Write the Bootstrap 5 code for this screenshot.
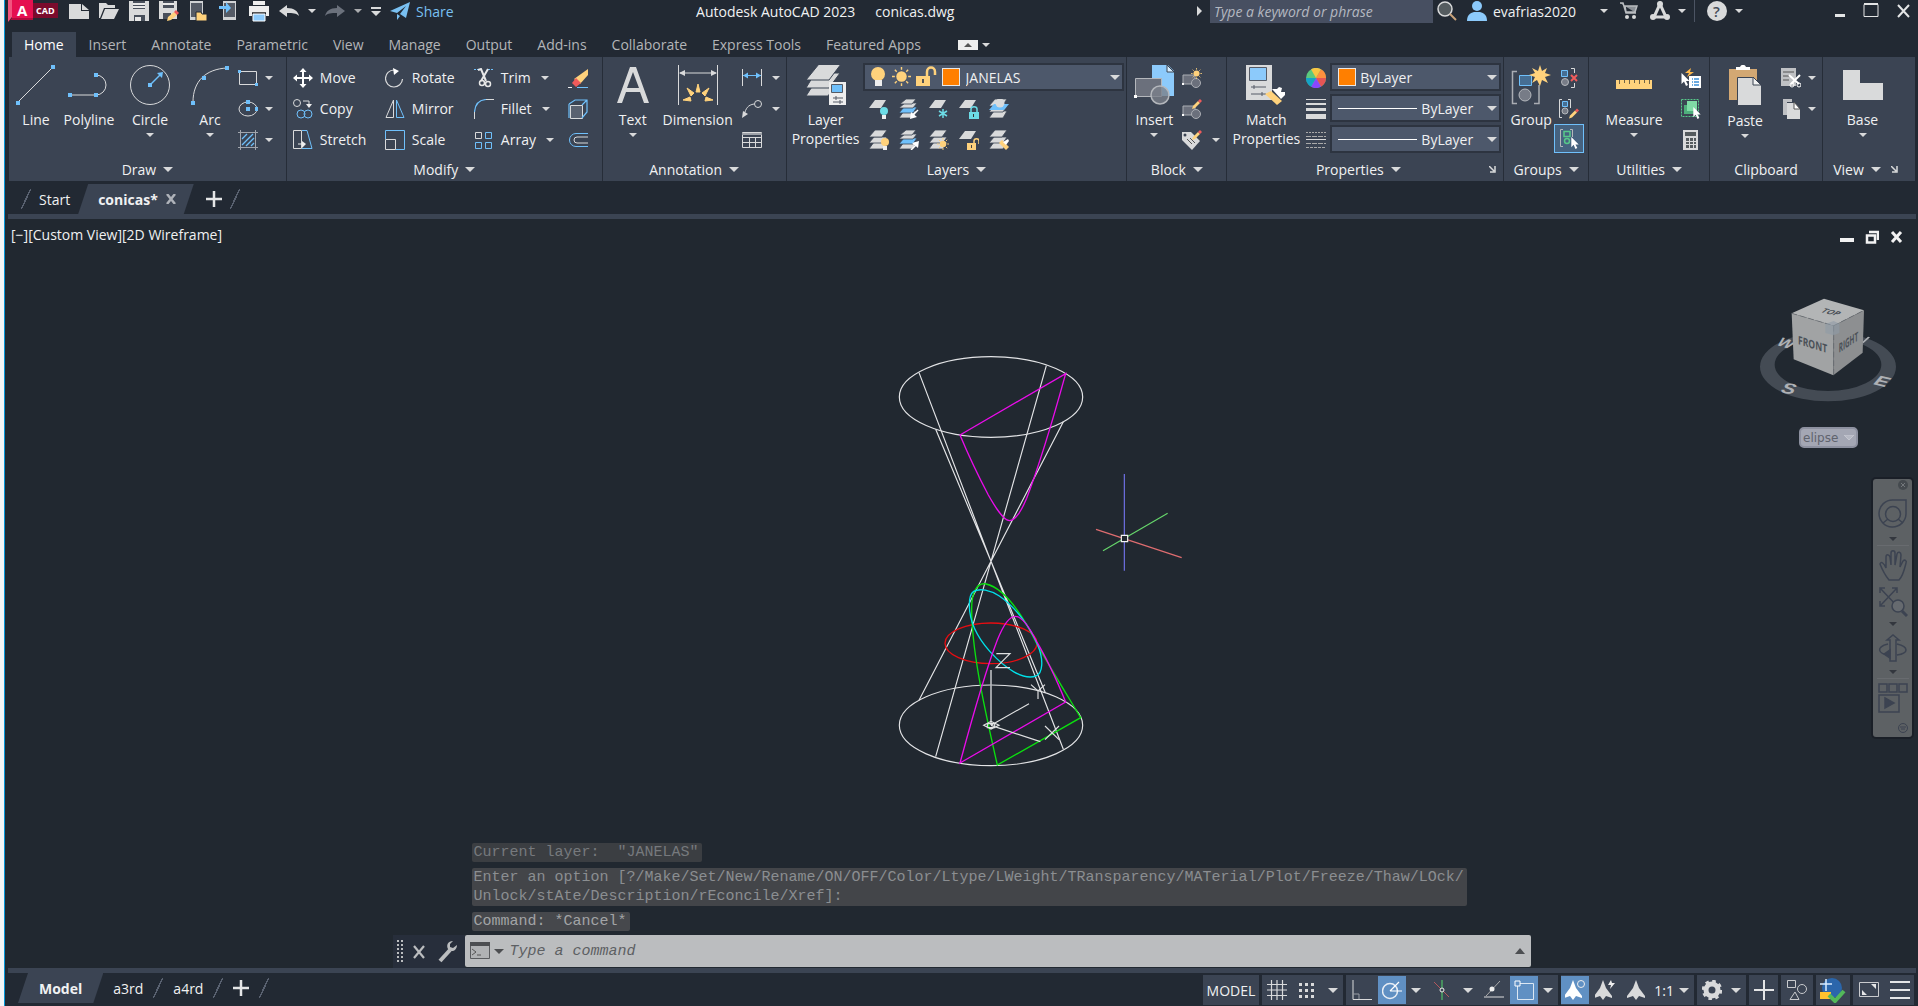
<!DOCTYPE html>
<html lang="en">
<head>
<meta charset="utf-8">
<meta name="viewport" content="width=device-width, initial-scale=1">
<title>Autodesk AutoCAD 2023 - conicas.dwg</title>
<link href="https://cdn.jsdelivr.net/npm/bootstrap@5.3.0/dist/css/bootstrap.min.css" rel="stylesheet">
<style>
:root{--chrome:#222933;--panel:#3b4453;--field:#4d586b;--ink:#f0f1f2;--g:#d9dadb;--b:#6fc0fb;--y:#ffd27c}
html{background:#f4f5f6}
body{margin-left:4px;border-left:1px solid #0696d7;background:var(--chrome);color:var(--ink);font-family:"Open Sans","Noto Sans",sans-serif;font-size:14px;line-height:19px;height:100vh;overflow:hidden}
button,select,input{font:inherit;color:inherit}
button{background:none;border:0;padding:0;white-space:nowrap}
a{color:inherit;text-decoration:none}
svg{flex:none;display:block}
.caret-s,.caret-l{flex:none;display:block;width:0;height:0;border:solid transparent;border-top-color:var(--g)}
.caret-s{border-width:4px 4px 0}
.caret-l{border-width:5px 5px 0}
/* title bar */
.titlebar{height:32px;padding:0 8px 10px 3px}
.qat{gap:10px;margin-left:11px}
.qat .caret-s{margin:0 -1px}
.brand-mark{width:50px;height:24px}
.share-link{color:#79c0f2;gap:6px;margin-left:9px}
.doc-title{gap:20px}
.user-link{gap:6px;margin-left:10px}
.find-box{width:223px;height:24px;background:#474f61;border:0;padding:0 4px;font-style:italic;outline:0}
.find-box::placeholder{color:#b4b8c0;opacity:1}
.sep-v{width:1px;height:22px;background:#4c5463}
/* ribbon */
.ribbon-tabs{height:25px;padding-left:7px;gap:1px}
.ribbon-tabs .nav-link{padding:3px 12px;color:#b3b5b8;height:25px;border-radius:0}
.ribbon-tabs .nav-link.active{background:var(--panel);color:#fff}
.ribbon{display:grid;grid-template-columns:278fr 316fr 184fr 341fr 100fr 277fr 85fr 121fr 113fr 92fr;margin:0 3px 0 4px;height:124px;background:var(--panel)}
.rpanel{display:flex;flex-direction:column;min-width:0;border-right:1px solid #262d38}
.rpanel:last-child{border-right:0}
.rbody{display:flex;height:98px;padding:5px 0 0 3px}
.rbody.snug{padding-left:1px}
.rfoot{height:26px;display:flex}
.rfoot button{flex:1;display:flex;justify-content:center;align-items:center;gap:7px;padding-top:2px}
.rfoot .launch{flex:0 0 14px;justify-content:start}
.rfoot .launch.wide{flex-basis:24px}
.big{display:flex;flex-direction:column;align-items:center;height:93px;padding-top:3px;line-height:19px;flex:none}
.big svg{margin-bottom:5px}
.big .caret-s{margin-top:4px}
.w48{width:48px}.w58{width:58px}.w64{width:64px}.w72{width:72px}
.sm-col{display:flex;flex-direction:column;flex:none}
.tool{display:flex;align-items:center;height:31px;gap:7px;text-align:left}
.tool .caret-s{margin-left:3px}
.mod-grid{display:grid;grid-template-columns:92px 89px 94px 20px;align-content:start;padding-left:6px}
.combos{padding:1px 2px 0 4px}
.lay-combos{padding:1px 2px 0 1px}
.lay-row{gap:10px;padding-left:6px}
.combo{display:flex;align-items:center;height:28px;background:var(--field);border:2px solid #2d3440;padding:0 2px 0 6px}
.combo select{flex:1;min-width:0;appearance:none;background:transparent;border:0;outline:0;padding:0 0 0 4px}
.combo option{color:#222}
.combo.lay{margin-bottom:2px}
.combo.lay select{padding-left:6px}
.sw{width:18px;height:18px;background:#ff7f00;border:1px solid #e8e8e8;flex:none}
.ltline{width:79px;height:1px;background:#fff;flex:none}
.picked{background:#46627f;outline:1px solid var(--b);height:27px;width:28px;justify-content:center;margin-top:1px}
/* file tabs */
.file-tabs{height:33px;padding-top:3px}
.slant{clip-path:polygon(10px 0,100% 0,calc(100% - 10px) 100%,0 100%);background:var(--panel);font-weight:700;height:30px}
.rule{height:5px;background:var(--panel);margin:0 2px 0 3px;flex:none}
.slash{width:10px;height:20px;flex:none;background:linear-gradient(116deg,transparent 46%,#596170 46%,#596170 54%,transparent 54%)}
/* drawing area */
.stage{background:#212830;min-height:0}
.vp-label{position:absolute;left:6px;top:6px}
.vp-btns{position:absolute;right:14px;top:11px;gap:11px}
.sketch{position:absolute;left:calc(50% - 82px);top:121px;overflow:visible}
.cube{position:absolute;right:0;top:61px}
.ucs-btn{position:absolute;right:60px;top:208px;width:59px;height:21px;border:2px solid #8d91a0;border-radius:5px;background:#a4a7b4;color:#5f636d;font:12px/16px "DejaVu Sans",sans-serif;display:flex;align-items:center;padding-left:2px;gap:6px}
.navbar-v{position:absolute;right:6px;top:260px;width:39px;height:258px;background:#5d6164;border-radius:3px;box-shadow:0 0 0 2px #1a1f27;display:flex;flex-direction:column;align-items:center}
.navbar-v hr{width:32px;margin:0;border-color:#8a8d90;height:1px}
.navbar-v .caret-s{border-top-color:#33373e}
.cmd{position:absolute;left:0;right:0;bottom:0;width:1138px;max-width:100%;margin:0 auto;font-family:"Liberation Mono",monospace;font-size:15px}
.hist{padding-left:79px;gap:6px;margin-bottom:4px;line-height:19px}
.hist div{background:#434549;color:#8b8e91;padding:0 3px 0 2px;border-radius:2px}
.hist .dim{background:#3b3e42;color:#76797d;white-space:pre}
.hist .lit{background:#46484c;color:#a2a4a6}
.cmd-left{width:72px;background:#272e3b;height:33px;gap:9px;padding-left:3px}
.cmd-box{flex:1;background:#bbbdbf;height:32px;border-radius:2px;padding:0 6px 0 5px}
.cmd-box .caret-l,.cmd-box .caret-l{border-top-color:#4c4e51}
.cmd-box input{flex:1;background:transparent;border:0;outline:0;font-style:italic;padding:0 0 0 6px}
.cmd-box input::placeholder{color:#5d6063;opacity:1}
/* status bar */
.status{height:33px}
.layouts{height:30px;gap:10px;padding-left:13px}
.layouts .slant{padding:0 21px}
.groups-row{gap:3px;padding:2px 4px 0 0}
.sgrp{background:var(--panel);height:30px;display:flex;align-items:center}
.sgrp button{height:28px;display:flex;align-items:center;justify-content:center}
.sgrp .caret-l{margin:0 5px}
.sgrp .on{background:#6090c3;width:28px}
.w29{width:29px}.w32{width:32px}.w34{width:34px}
</style>
<script src="https://cdn.jsdelivr.net/npm/bootstrap@5.3.0/dist/js/bootstrap.bundle.min.js"></script>
</head>
<body class="d-flex flex-column">
<svg width="0" height="0" class="position-absolute">
<symbol id="one" viewBox="0 0 20 20"><path d="M6 1h11l-5 8H0z" fill="#d9dadb"/></symbol>
<symbol id="stk" viewBox="0 0 20 20"><g fill="#d9dadb" stroke="#3b4453" stroke-width=".8"><path d="M5 12h13l-4 7H0z"/><path d="M5 7h13l-4 6H0z"/><path d="M6 0h12l-5 7H0z"/></g></symbol>
<symbol id="stkb" viewBox="0 0 20 20"><g stroke="#3b4453" stroke-width=".8"><path d="M5 12h13l-4 7H0z" fill="#d9dadb"/><path d="M5 8h13l-4 6H0z" fill="#6fc0fb"/><path d="M6 4h12l-4 5H0z" fill="#d9dadb"/><path d="M7 0h10l-4 5H1z" fill="#d9dadb"/></g></symbol>
<symbol id="pencil" viewBox="0 0 10 10"><path d="M0 10l1-3 5-5 2 2-5 5z" fill="#ffd27c"/><path d="M6 2l2-2 2 2-2 2z" fill="#ef5b5b"/></symbol>
<symbol id="sun" viewBox="0 0 20 20"><circle cx="10" cy="10" r="5.500" fill="#ffd27c"/><path d="M10 0v3M10 17v3M0 10h3M17 10h3M3 3l2 2M15 15l2 2M3 17l2-2M15 5l2-2" stroke="#ffd27c" stroke-width="1.500"/></symbol>
<symbol id="arrowcur" viewBox="0 0 8 13"><path d="M0 0v11l2.500-2.500L4.500 13l2-1-2-4H8z" fill="#fff"/></symbol>
<symbol id="blk" viewBox="0 0 20 20"><path d="M1 7h12v9H1z" fill="#6b707c" stroke="#aaadb3"/><circle cx="14" cy="15" r="4.500" fill="#6b707c" stroke="#aaadb3"/><path d="M0 15h2v2H0z" fill="#fff"/></symbol>
<symbol id="annoman" viewBox="0 0 20 20"><path d="M10 0l3 8 6 8v2l-6-2-3 4-3-4-6 2v-2l6-8z" fill="currentColor"/></symbol>
</svg>

<header class="titlebar d-flex align-items-center">
 <svg class="brand-mark" viewBox="0 0 50 24"><path d="M4 0h21v21H4z" fill="#e51050"/><path d="M0 0h4v18l-4 5z" fill="#f2547f"/><path d="M0 23l4-4h21v2H2z" fill="#b00c3e"/><path d="M25 4h25v15H25z" fill="#7a0b2c"/><text x="9" y="17" font-size="15" font-weight="700" fill="#fff">A</text><text x="28" y="15" font-size="9" font-weight="700" fill="#fff">CAD</text></svg>
 <div class="qat d-flex align-items-center">
  <button aria-label="New"><svg width="20" height="22"><path d="M0 4h12v7h8v8H0zM13 4l7 6h-7z" fill="#d9dadb"/></svg></button>
  <button aria-label="Open"><svg width="20" height="22"><path d="M0 3h7l2 2h7v3H5L1 18H0zM6 9h14l-5 10H2z" fill="#d9dadb"/></svg></button>
  <button aria-label="Save"><svg width="20" height="22"><path d="M0 1h20v20H0z" fill="#d9dadb"/><path d="M4 1h12v8H4zM5 15h11v6H5z" fill="#484f5b"/><path d="M4 3h12v2H4zM4 6h12v2H4zM6 17h6v4H6z" fill="#e8e8e8"/></svg></button>
  <button aria-label="Save as"><svg width="20" height="22"><path d="M0 1h18v18H0z" fill="#d9dadb"/><path d="M4 1h11v7H4zM4 13h8v6H4z" fill="#484f5b"/><path d="M4 3h11v2H4z" fill="#e8e8e8"/><path d="M8 21l1-4 6-5 3 3-6 5z" fill="#ffd27c"/><path d="M15 12l2-2 3 3-2 2z" fill="#ef5b5b"/></svg></button>
  <button aria-label="Open from web and mobile"><svg width="20" height="22"><path d="M1 1h13v19H1z" fill="#d0d2d4"/><path d="M2 3h11v14H2z" fill="#555b66"/><path d="M7 12h5l1 2h5v7H7z" fill="#ffd27c" stroke="#222933"/></svg></button>
  <button aria-label="Save to web and mobile"><svg width="20" height="22"><path d="M4 1h13v19H4z" fill="#d0d2d4"/><path d="M5 3h11v14H5z" fill="#555b66"/><path d="M0 6h7V2l5 6-5 5V9H0z" fill="#6fc0fb"/></svg></button>
  <button aria-label="Plot"><svg width="20" height="22"><path d="M4 1h12v4H4zM0 6h20v10h-3v-3H3v3H0z" fill="#eee"/><path d="M4 14h12v7H4z" fill="#8ccafb" stroke="#fff"/><path d="M3 12h14v1H3z" fill="#555"/></svg></button>
  <button aria-label="Undo"><svg width="20" height="22"><path d="M0 11l8-6v3c7 0 11 3 12 8-3-3-6-3-12-3v4z" fill="#d9dadb"/></svg></button>
  <span class="caret-s"></span>
  <button aria-label="Redo"><svg width="20" height="22"><path d="M20 11l-8-6v3C5 8 1 11 0 16c3-3 6-3 12-3v4z" fill="#6b717c"/></svg></button>
  <span class="caret-s opacity-75"></span>
  <button aria-label="Customize"><svg width="10" height="10"><path d="M0 1h10v2H0zM0 5h10l-5 5z" fill="#d9dadb"/></svg></button>
 </div>
 <a href="#" class="share-link d-flex align-items-center"><svg width="20" height="18"><path d="M0 9L20 0l-4 16-6-4 6-8-9 7zM7 12l3 2-3 4z" fill="#79c0f2"/></svg>Share</a>
 <div class="doc-title d-flex mx-auto text-nowrap"><span>Autodesk AutoCAD 2023</span><span>conicas.dwg</span></div>
 <svg width="5" height="10" class="me-2"><path d="M0 0l5 5-5 5z" fill="#d9dadb"/></svg>
 <input class="find-box" type="text" placeholder="Type a keyword or phrase" aria-label="Type a keyword or phrase">
 <button aria-label="Search" class="ms-1"><svg width="20" height="20"><circle cx="8" cy="8" r="7" fill="#555c60" stroke="#d9dadb" stroke-width="1.500"/><path d="M13 13l6 6" stroke="#c9a27a" stroke-width="2"/></svg></button>
 <a href="#" class="user-link d-flex align-items-center"><svg width="20" height="20"><circle cx="10" cy="5" r="5" fill="#8ccafb"/><path d="M0 20c0-6 3-8 7-9h6c4 1 7 3 7 9z" fill="#8ccafb"/></svg>evafrias2020</a>
 <span class="caret-s ms-4"></span>
 <button aria-label="Cart" class="ms-2 ps-1"><svg width="18" height="18"><path d="M0 1h3l3 10h10M5 4h12l-2 6H6z" fill="#8b9097" stroke="#b9bcc0" stroke-width="1.500"/><circle cx="7" cy="15" r="2" fill="#d9dadb"/><circle cx="14" cy="15" r="2" fill="#d9dadb"/></svg></button>
 <button aria-label="Apps" class="ms-2 ps-1"><svg width="20" height="20"><path d="M10 3L4 16h12z" fill="none" stroke="#d9dadb" stroke-width="3"/><circle cx="10" cy="3" r="3" fill="#d9dadb"/><circle cx="3" cy="16" r="3" fill="#d9dadb"/><circle cx="17" cy="16" r="3" fill="#d9dadb"/></svg></button>
 <span class="caret-s ms-2"></span><span class="sep-v ms-2 me-2"></span>
 <button aria-label="Help" class="ms-1"><svg width="20" height="20"><circle cx="10" cy="10" r="10" fill="#d9dadb"/><text x="6" y="16" font-size="15" font-weight="600" fill="#444b57">?</text></svg></button>
 <span class="caret-s ms-2"></span>
 <div class="d-flex align-items-center ms-5 ps-4">
  <button aria-label="Minimize" class="ms-3 ps-1"><svg width="10" height="14"><path d="M0 10h10v3H0z" fill="#e4e5e6"/></svg></button>
  <button aria-label="Maximize" class="ms-3"><svg width="20" height="20"><path d="M3 3.500h14v12H3z" fill="none" stroke="#e4e5e6"/><path d="M3 2h14v2H3z" fill="#e4e5e6"/></svg></button>
  <button aria-label="Close" class="ms-3"><svg width="13" height="15"><path d="M1 1l11 12M12 1L1 13" stroke="#e4e5e6" stroke-width="2"/></svg></button>
 </div>
</header>

<ul class="nav ribbon-tabs flex-nowrap text-nowrap">
 <li><a href="#" class="nav-link active">Home</a></li><li><a href="#" class="nav-link">Insert</a></li><li><a href="#" class="nav-link">Annotate</a></li><li><a href="#" class="nav-link">Parametric</a></li><li><a href="#" class="nav-link">View</a></li><li><a href="#" class="nav-link">Manage</a></li><li><a href="#" class="nav-link">Output</a></li><li><a href="#" class="nav-link">Add-ins</a></li><li><a href="#" class="nav-link">Collaborate</a></li><li><a href="#" class="nav-link">Express Tools</a></li><li><a href="#" class="nav-link">Featured Apps</a></li>
 <li class="d-flex align-items-center gap-1 ms-4"><svg width="20" height="10"><path d="M0 0h20v10H0z" fill="#eee"/><path d="M6 7l4-4 4 4z" fill="#555"/></svg><span class="caret-s"></span></li>
</ul>

<main class="ribbon flex-shrink-0">
 <section class="rpanel"><div class="rbody">
  <button class="big w48"><svg width="42" height="40"><path d="M3 37L37 3" stroke="#d9dadb"/><path d="M1 36h4v4H1zM36 0h4v4h-4z" fill="#6fc0fb"/></svg>Line</button>
  <button class="big w58"><svg width="42" height="40"><path d="M3 30h25a10 10 0 0 0 0-20" fill="none" stroke="#d9dadb"/><path d="M0 28h4v4H0zM26 28h4v4h-4zM26 8h4v4h-4z" fill="#6fc0fb"/></svg>Polyline</button>
  <button class="big w64"><svg width="40" height="40"><circle cx="20" cy="20" r="19.500" fill="none" stroke="#d9dadb"/><path d="M20 20L31 9" stroke="#6fc0fb" stroke-width="1.500"/><path d="M18 18h4v4h-4zM27 8l6-1-1 6z" fill="#6fc0fb"/></svg>Circle<span class="caret-s"></span></button>
  <button class="big w48 ms-1"><svg width="40" height="40"><path d="M3 37C3 16 16 4 37 3" fill="none" stroke="#d9dadb"/><path d="M1 36h4v4H1zM12 11h4v4h-4zM35 1h4v4h-4z" fill="#6fc0fb"/></svg>Arc<span class="caret-s"></span></button>
  <div class="sm-col ms-1">
   <button class="tool" aria-label="Rectangle"><svg width="20" height="20"><path d="M1.500 3.500h17v13h-17z" fill="none" stroke="#d9dadb"/><path d="M0 2h3v3H0zM17 15h3v3h-3z" fill="#6fc0fb"/></svg><span class="caret-s ms-0"></span></button>
   <button class="tool" aria-label="Ellipse"><svg width="20" height="20"><ellipse cx="10" cy="10" rx="9" ry="7" fill="none" stroke="#d9dadb"/><path d="M8 1h4v4H8zM8 8h4v4H8zM17 8h3v4h-3z" fill="#6fc0fb"/></svg><span class="caret-s ms-0"></span></button>
   <button class="tool" aria-label="Hatch"><svg width="20" height="20"><path d="M0 2.500h20M0 17.500h20M2.500 0v20M17.500 0v20" stroke="#a2a6ad"/><path d="M4 9l5-5M4 15L15 4M8 16l8-8M13 16l3-3" stroke="#6fc0fb" stroke-width="1.300"/></svg><span class="caret-s ms-0"></span></button>
  </div></div><div class="rfoot"><button>Draw<span class="caret-l"></span></button></div></section>

 <section class="rpanel"><div class="rbody mod-grid d-grid">
  <button class="tool"><svg width="20" height="20"><path d="M10 0l3.500 4H11v5h5V6.500l4 3.500-4 3.500V11h-5v5h2.500L10 20l-3.500-4H9v-5H4v2.500L0 10l4-3.500V9h5V4H6.500z" fill="#fff"/></svg>Move</button>
  <button class="tool"><svg width="20" height="20"><path d="M9 2a8.500 8.500 0 1 0 8.500 9" fill="none" stroke="#d9dadb" stroke-width="1.200"/><path d="M8 0l6 3-5 4z" fill="#fff"/></svg>Rotate</button>
  <button class="tool"><svg width="20" height="20"><path d="M0 1.500h6M14 1.500h6" stroke="#6fc0fb" stroke-dasharray="2 1"/><path d="M4 2l3-1 5 12M14 1L7 13" stroke="#e8e8e8" stroke-width="2" fill="none"/><circle cx="8" cy="15" r="2.500" fill="none" stroke="#e8e8e8" stroke-width="1.500"/><circle cx="14" cy="16" r="2.500" fill="none" stroke="#e8e8e8" stroke-width="1.500"/></svg>Trim<span class="caret-s"></span></button>
  <button class="tool" aria-label="Erase"><svg width="20" height="20"><path d="M6 11L20 1v6l-8 9z" fill="#ffd27c"/><path d="M4 15l4-5 5 5-5 4z" fill="#ef5b5b"/><path d="M0 19.500h4" stroke="#eee"/><path d="M9 19.500h11" stroke="#6fc0fb"/></svg></button>
  <button class="tool"><svg width="20" height="20"><circle cx="4" cy="4" r="3.500" fill="none" stroke="#d9dadb"/><path d="M10 2h6v4" fill="none" stroke="#d9dadb"/><path d="M13 5h6l-3 4z" fill="#eee"/><circle cx="8" cy="15" r="4" fill="none" stroke="#6fc0fb"/><circle cx="15" cy="15" r="4" fill="none" stroke="#6fc0fb"/></svg>Copy</button>
  <button class="tool"><svg width="20" height="20"><path d="M8.500 1v17.500H1z" fill="none" stroke="#d9dadb"/><path d="M11.500 1v17.500H19z" fill="none" stroke="#6fc0fb"/></svg>Mirror</button>
  <button class="tool"><svg width="20" height="20"><path d="M.500 20v-7" stroke="#d9dadb"/><path d="M.500 13C1 6 5 1 12 .500" fill="none" stroke="#6fc0fb" stroke-width="1.200"/><path d="M12 .500h8" stroke="#d9dadb"/></svg>Fillet<span class="caret-s"></span></button>
  <button class="tool" aria-label="Explode"><svg width="20" height="20"><path d="M2.500 6.500h12v13h-12z" fill="#5a6270" stroke="#d9dadb"/><path d="M1 5l6-4h12v12l-5 6M14 6l5-5M1 5v14" fill="none" stroke="#6fc0fb" stroke-width="1.200"/></svg></button>
  <button class="tool"><svg width="20" height="20"><path d="M.500.500h8v18h-8z" fill="none" stroke="#d9dadb"/><path d="M9 .500h5l5 18H9" fill="none" stroke="#6fc0fb"/><path d="M5 14h6" stroke="#eee"/><path d="M9 11l4 3-4 4z" fill="#eee"/></svg>Stretch</button>
  <button class="tool"><svg width="20" height="20"><path d="M.500.500h19v19h-9M.500 9V.500" fill="none" stroke="#6fc0fb"/><path d="M.500 9.500h10v10h-10z" fill="none" stroke="#d9dadb"/></svg>Scale</button>
  <button class="tool"><svg width="20" height="20" fill="none"><path d="M1.500 2.500h6v6h-6z" stroke="#d9dadb"/><path d="M11.500 2.500h6v6h-6zM1.500 12.500h6v6h-6zM11.500 12.500h6v6h-6z" stroke="#6fc0fb"/></svg>Array<span class="caret-s"></span></button>
  <button class="tool" aria-label="Offset"><svg width="20" height="20" fill="none"><path d="M20 3.500H8a6.500 6.500 0 0 0 0 13h12" stroke="#6fc0fb"/><path d="M20 7H9a3 3 0 0 0 0 6h11" stroke="#d9dadb"/></svg></button>
  </div><div class="rfoot"><button>Modify<span class="caret-l"></span></button></div></section>

 <section class="rpanel"><div class="rbody snug">
  <button class="big w58"><svg width="32" height="40"><path d="M0 38L13 2h6l13 36h-5l-4-11H9L5 38zM10 23h12L16 7z" fill="#d9dadb"/></svg>Text<span class="caret-s"></span></button>
  <button class="big w72"><svg width="40" height="40"><path d="M.500 0v40M39.500 0v40M2 8h36" stroke="#d9dadb"/><path d="M1 8l6-3v6zM39 8l-6-3v6z" fill="#d9dadb"/><path d="M20 19l2 8h-4zM9 23l7 5-3 3zM31 23l-7 5 3 3zM5 35l7-3 1 4zM35 35l-7-3-1 4z" fill="#ffd27c" stroke="#ffd27c"/></svg>Dimension</button>
  <div class="sm-col ms-2">
   <button class="tool" aria-label="Linear"><svg width="20" height="20"><path d="M.500 1v17M19.500 1v17" stroke="#d9dadb"/><path d="M1 7.500h18" stroke="#6fc0fb"/><path d="M1 7.500l5-3v6zM19 7.500l-5-3v6z" fill="#6fc0fb"/></svg><span class="caret-s"></span></button>
   <button class="tool" aria-label="Leader"><svg width="20" height="20"><path d="M2 16c2-7 4-10 10-11" fill="none" stroke="#d9dadb"/><path d="M0 19l1-7 5 3z" fill="#d9dadb"/><circle cx="16" cy="5" r="3.500" fill="none" stroke="#d9dadb"/></svg><span class="caret-s"></span></button>
   <button class="tool" aria-label="Table"><svg width="20" height="20"><path d="M.500 2.500h19v15H.500zM0 7.500h20M0 12.500h20M7.500 7v10M13.500 7v10" fill="none" stroke="#d9dadb"/><path d="M0 4h20" stroke="#9ea2a9" stroke-width="2"/></svg></button>
  </div></div><div class="rfoot"><button>Annotation<span class="caret-l"></span></button></div></section>

 <section class="rpanel"><div class="rbody">
  <button class="big w72"><svg width="40" height="40"><g fill="#d9dadb" stroke="#3b4453"><path d="M9 17h23l-10 14H0z"/><path d="M9 8h25L23 23H0z"/><path d="M13-1h22L23 15H0z"/></g><path d="M23 17h17v23H23z" fill="#eee"/><path d="M25.500 19.500h11v8h-11z" fill="#6fc0fb" stroke="#555b66"/><path d="M27 33h10M27 37h10M30 31v4M34 35v4" stroke="#555b66"/></svg><span>Layer<br>Properties</span></button>
  <div class="lay-combos flex-grow-1"><div class="combo lay">
    <svg width="71" height="22"><circle cx="7" cy="8" r="7" fill="#ffd27c"/><path d="M4 14h7v6H4z" fill="#eee"/><use href="#sun" x="21" y="1" width="19" height="19"/><path d="M45 10h14v10H45z" fill="#ffd27c"/><path d="M56 10V6c0-6 8-6 8 0v3" fill="none" stroke="#ffd27c" stroke-width="2.500"/><path d="M51 13h2v4h-2z" fill="#555"/></svg>
    <span class="sw"></span><select aria-label="Layer"><option>JANELAS</option></select><span class="caret-l"></span></div>
   <div class="lay-row d-flex">
    <button class="tool" aria-label="Off"><svg width="20" height="20"><use href="#one"/><circle cx="15" cy="12" r="4" fill="#6cdce6"/><path d="M13 16h4v4h-4z" fill="#eee"/></svg></button>
    <button class="tool" aria-label="Isolate"><svg width="20" height="20"><use href="#stkb"/><path d="M19 11l-6 6" stroke="#fff" stroke-width="1.500"/><path d="M11 20l1-7 6 5z" fill="#fff"/></svg></button>
    <button class="tool" aria-label="Freeze"><svg width="20" height="20"><use href="#one"/><path d="M14 10v9M10 12l8 5M10 17l8-5" stroke="#6cdce6" stroke-width="1.500"/></svg></button>
    <button class="tool" aria-label="Lock"><svg width="20" height="20"><use href="#one"/><path d="M10 13h10v7H10z" fill="#6cdce6"/><path d="M12 13v-3c0-3 6-3 6 0v3" fill="none" stroke="#6cdce6" stroke-width="1.500"/><path d="M14 15h1v3h-1z" fill="#333"/></svg></button>
    <button class="tool" aria-label="Make current"><svg width="20" height="20"><use href="#stk"/><path d="M5 5h15l-5 6H0z" fill="#6fc0fb"/><circle cx="11" cy="4" r="4.500" fill="#d9dadb"/></svg></button>
   </div>
   <div class="lay-row d-flex">
    <button class="tool" aria-label="Turn all on"><svg width="20" height="20"><use href="#stk"/><circle cx="16" cy="12" r="4" fill="#ffd27c"/><path d="M14 16h4v4h-4z" fill="#eee"/></svg></button>
    <button class="tool" aria-label="Unisolate"><svg width="20" height="20"><use href="#stkb"/><path d="M12 20l6-6" stroke="#fff" stroke-width="1.500"/><path d="M20 11l-1 7-6-5z" fill="#fff"/></svg></button>
    <button class="tool" aria-label="Thaw all"><svg width="20" height="20"><use href="#stk"/><use href="#sun" x="8" y="8" width="12" height="12"/></svg></button>
    <button class="tool" aria-label="Unlock"><svg width="20" height="20"><use href="#one"/><path d="M8 13h9v7H8z" fill="#ffd27c"/><path d="M15 13v-2c0-3 5-3 5 0v3" fill="none" stroke="#ffd27c" stroke-width="1.500"/><path d="M12 15h1v3h-1z" fill="#444"/></svg></button>
    <button class="tool" aria-label="Match layer"><svg width="20" height="20"><use href="#stk"/><path d="M10 13l3-3 7 7-3 3z" fill="#ffd27c"/><path d="M14 12l5-3 1 2-3 4z" fill="#fff"/></svg></button>
   </div></div></div><div class="rfoot"><button>Layers<span class="caret-l"></span></button></div></section>

 <section class="rpanel"><div class="rbody">
  <button class="big w48"><svg width="40" height="40"><path d="M18 0h16l6 6v25H18z" fill="#8ccafb"/><path d="M33 0v7h7z" fill="#d8eefe" stroke="#3b4453"/><path d="M1.500 13.500h26v18h-26z" fill="#6b707c" stroke="#b4b7bc"/><circle cx="26" cy="30" r="9" fill="#7a7f8a" fill-opacity=".8" stroke="#b4b7bc" stroke-width="1.500"/><path d="M0 30h3v3H0z" fill="#fff"/></svg>Insert<span class="caret-s"></span></button>
  <div class="sm-col ms-1">
   <button class="tool" aria-label="Create block"><svg width="20" height="20"><use href="#blk"/><use href="#sun" x="9" y="0" width="11" height="11"/></svg></button>
   <button class="tool" aria-label="Edit block"><svg width="20" height="20"><use href="#blk"/><use href="#pencil" x="10" y="0" width="10" height="10"/></svg></button>
   <button class="tool" aria-label="Edit attributes"><svg width="20" height="20"><path d="M0 2h9l9 9-8 9L0 10z" fill="#d9dadb"/><path d="M5 9l5 5M8 8l5 5" stroke="#555"/><circle cx="3" cy="5" r="1.500" fill="#3b4453"/><use href="#pencil" x="10" y="0" width="10" height="10"/></svg><span class="caret-s"></span></button>
  </div></div><div class="rfoot"><button>Block<span class="caret-l"></span></button></div></section>

 <section class="rpanel"><div class="rbody">
  <button class="big w72"><svg width="40" height="40"><path d="M0 0h26v35H0z" fill="#d9dadb"/><path d="M3.500 2.500h17v13h-17z" fill="#8ccafb" stroke="#555b66"/><path d="M5 22h15M5 29h15M8 20v4M16 27v4" stroke="#555b66"/><path d="M19 29l6-3 11 10-5 4z" fill="#ffd27c"/><path d="M26 24l5 0 2-2 3 1-1 4 4 0 0 3-4 4z" fill="#fff"/></svg><span>Match<br>Properties</span></button>
  <div class="sm-col ms-1">
   <div class="tool"><svg width="20" height="20"><circle cx="10" cy="10" r="10" fill="#5bc97e"/><path d="M10 10L5 1.300A10 10 0 0 1 15 1.300z" fill="#f7c544"/><path d="M10 10l5-8.700A10 10 0 0 1 20 10z" fill="#ff8f3e"/><path d="M10 10h10a10 10 0 0 1-5 8.700z" fill="#e65555"/><path d="M10 10l5 8.700a10 10 0 0 1-10 0z" fill="#8b47ff"/><path d="M10 10l-5 8.700A10 10 0 0 1 0 10z" fill="#14a3c8"/></svg></div>
   <div class="tool"><svg width="20" height="20"><path d="M0 0h20v1H0zM0 4h20v2H0zM0 9h20v3H0zM0 15h20v5H0z" fill="#d9dadb"/></svg></div>
   <div class="tool"><svg width="20" height="20"><path d="M0 2.500h20" stroke="#aaa" stroke-dasharray="2 1"/><path d="M0 6.500h20M0 13.500h20" stroke="#aaa" stroke-dasharray="5 1"/><path d="M0 9.500h20" stroke="#d9dadb"/><path d="M0 17.500h20" stroke="#aaa" stroke-dasharray="3 1"/></svg></div>
  </div>
  <div class="combos flex-grow-1 d-flex flex-column" style="gap:3px">
   <div class="combo"><span class="sw"></span><select aria-label="Object color"><option>ByLayer</option></select><span class="caret-l"></span></div>
   <div class="combo"><span class="ltline"></span><select aria-label="Lineweight"><option>ByLayer</option></select><span class="caret-l"></span></div>
   <div class="combo"><span class="ltline"></span><select aria-label="Linetype"><option>ByLayer</option></select><span class="caret-l"></span></div>
  </div></div><div class="rfoot"><button>Properties<span class="caret-l"></span></button><button class="launch" aria-label="Properties dialog"><svg width="7" height="7"><path d="M0 0l5 5M6 0v6H1" fill="none" stroke="#d9dadb" stroke-width="1.500"/></svg></button></div></section>

 <section class="rpanel"><div class="rbody">
  <button class="big w48"><svg width="40" height="40" fill="none"><path d="M6 6.500H1.500v32H6M23 38.500h5V20" stroke="#aaadb3" stroke-width="1.500"/><path d="M8.500 10.500h12v10h-12z" fill="#466e93" stroke="#6fc0fb"/><circle cx="14" cy="30" r="6" fill="#777c87" stroke="#b4b7bc"/><path d="M29 0l2 6 5-3-2 5 6 2-6 2 3 6-6-3-2 6-3-6-5 3 3-6-6-2 6-2-3-5 6 3z" fill="#ffd27c"/></svg>Group</button>
  <div class="sm-col">
   <button class="tool ps-1" aria-label="Ungroup"><svg width="20" height="20" fill="none"><path d="M2.500 2.500h6v6h-6z" fill="#466e93" stroke="#6fc0fb"/><circle cx="6" cy="14" r="3.500" fill="#777c87" stroke="#b4b7bc"/><path d="M12 .500h3.500V5M12 19.500h3.500V15" stroke="#d9dadb"/><path d="M12 7l6 6M18 7l-6 6" stroke="#ef5b5b" stroke-width="2"/></svg></button>
   <button class="tool ps-1" aria-label="Group edit"><svg width="20" height="20" fill="none"><path d="M3 .500H.500v18H3M9 .500h2.500V9" stroke="#d9dadb"/><path d="M3.500 2.500h5v5h-5z" fill="#466e93" stroke="#6fc0fb"/><circle cx="6" cy="12" r="3" fill="#777c87" stroke="#b4b7bc"/><use href="#pencil" x="10" y="9" width="10" height="11"/></svg></button>
   <button class="tool picked" aria-label="Group selection"><svg width="20" height="20" fill="none"><path d="M4 .500H1.500v17H4M11 .500h2.500V8" stroke="#b4b7bc"/><path d="M5 2.500h6v5H5z" stroke="#57c98a" stroke-width="1.500"/><circle cx="8" cy="12" r="2.500" stroke="#57c98a" stroke-width="1.500"/><use href="#arrowcur" x="12" y="8" width="8" height="12"/></svg></button>
  </div></div><div class="rfoot"><button>Groups<span class="caret-l"></span></button></div></section>

 <section class="rpanel"><div class="rbody justify-content-between pe-2">
  <button class="big w72 ms-1 ps-1"><svg width="36" height="40"><path d="M0 15h36v9H0z" fill="#ffd27c"/><path d="M3.500 15v4M8.500 15v3M13.500 15v4M18.500 15v3M23.500 15v4M28.500 15v3M33.500 15v4" stroke="#6f6246"/></svg>Measure<span class="caret-s"></span></button>
  <div class="sm-col">
   <button class="tool" aria-label="Quick select"><svg width="20" height="20"><path d="M10 0L4 5h4l-2 4 7-5H9z" fill="#ffb84a"/><use href="#arrowcur" x="0" y="5" width="9" height="13"/><path d="M8 8h12v12H8z" fill="#fff"/><path d="M11 11h1M11 14h1M11 17h1M13 11h5M13 14h5M13 17h5" stroke="#3b8fd6" stroke-width="1.300"/></svg></button>
   <button class="tool" aria-label="Select all"><svg width="20" height="20"><path d="M.500.500h17v17H.500z" fill="none" stroke="#57c98a" stroke-dasharray="2 1"/><path d="M3 6h10v9H3z" fill="#4fae7c"/><path d="M6 2h10v10H6z" fill="#7fdba6"/><use href="#arrowcur" x="12" y="8" width="8" height="12"/></svg></button>
   <button class="tool" aria-label="Calculator"><svg width="20" height="20"><path d="M2 0h15v20H2z" fill="#d9dadb"/><path d="M4 2h11v4H4zM5 8h3v3H5zM9 8h3v3H9zM13 8h2v3h-2zM5 12h3v2H5zM9 12h3v2H9zM13 12h2v2h-2zM5 15h3v3H5zM9 15h3v3H9zM13 15h2v3h-2z" fill="#555b5e"/></svg></button>
  </div></div><div class="rfoot"><button>Utilities<span class="caret-l"></span></button></div></section>

 <section class="rpanel"><div class="rbody">
  <button class="big w64"><svg width="32" height="41"><path d="M0 4h28v31H0z" fill="#d3a873"/><path d="M7 5V2h4c1-3 5-3 6 0h4v3z" fill="#fff"/><path d="M8.500 12.500h15l9 8v20h-24z" fill="#d9dadb" stroke="#3b4453"/><path d="M24 12v8h8z" fill="#f2f2f2" stroke="#3b4453"/></svg>Paste<span class="caret-s"></span></button>
  <div class="sm-col ms-1">
   <button class="tool" aria-label="Cut"><svg width="20" height="20"><path d="M0 0h15v18H0z" fill="#bfc1c4"/><path d="M2 4h11M2 8h8M2 12h6" stroke="#555"/><path d="M8 7l10 9M19 7l-9 9" stroke="#fff" stroke-width="2"/><circle cx="11" cy="17" r="2" fill="none" stroke="#fff"/><circle cx="18" cy="17" r="2" fill="none" stroke="#fff"/></svg><span class="caret-s ms-0"></span></button>
   <button class="tool" aria-label="Copy clip"><svg width="20" height="20"><path d="M2 0h9v3H6v13H2z" fill="#bfc1c4"/><path d="M6 4h7l6 6v10H6z" fill="#d9dadb"/><path d="M13 3v7h6z" fill="#fff" stroke="#555"/></svg><span class="caret-s ms-0"></span></button>
  </div></div><div class="rfoot"><button>Clipboard</button></div></section>

 <section class="rpanel"><div class="rbody justify-content-center pe-3">
  <button class="big w58"><svg width="40" height="40"><path d="M0 5h17v13h23v17H0z" fill="#d9dadb"/></svg>Base<span class="caret-s"></span></button></div>
  <div class="rfoot"><button>View<span class="caret-l"></span></button><button class="launch wide" aria-label="View dialog"><svg width="7" height="7"><path d="M0 0l5 5M6 0v6H1" fill="none" stroke="#d9dadb" stroke-width="1.500"/></svg></button></div></section>
</main>

<nav class="file-tabs d-flex flex-shrink-0 align-items-center">
 <span class="slash ms-3"></span><a href="#" class="ms-2">Start</a>
 <a href="#" class="slant d-flex align-items-center ms-2 ps-3 pe-3"><span class="ps-1 pe-2">conicas*</span><svg width="12" height="10"><path d="M1 0l8 10M9 0L1 10" stroke="#aeb2b9" stroke-width="2.500"/></svg></a>
 <button aria-label="New tab" class="ms-2 ps-1"><svg width="16" height="16"><path d="M8 0v16M0 8h16" stroke="#e4e5e6" stroke-width="2.500"/></svg></button><span class="slash ms-2 ps-1"></span>
</nav>
<div class="rule"></div>

<section class="stage flex-grow-1 position-relative">
 <div class="vp-label">[−][Custom View][2D Wireframe]</div>
 <div class="vp-btns d-flex">
  <button aria-label="Minimize view"><svg width="14" height="15"><path d="M0 8h14v4H0z" fill="#f2f2f2"/></svg></button>
  <button aria-label="Restore view"><svg width="14" height="15"><path d="M4 2h9v8M2 5.500h8v7H2z" fill="none" stroke="#f2f2f2" stroke-width="2.500"/></svg></button>
  <button aria-label="Close view"><svg width="14" height="15"><path d="M2 2l9 10M11 2L2 12" stroke="#f2f2f2" stroke-width="3"/></svg></button>
 </div>

 <svg class="sketch" width="320" height="440" viewBox="0 0 960 1320" fill="none" stroke-width="3.500">
  <g stroke="#e3e4e6"><ellipse cx="333" cy="171" rx="275" ry="121"/><ellipse cx="333" cy="1156" rx="275" ry="121"/>
  <path d="M117 98L333 664 550 1228M499 77L333 664 167 1250M167 268L333 664 496 1058M550 245L333 664 117 1081"/></g>
  <ellipse cx="333" cy="910" rx="138" ry="61" stroke="#e60d12" stroke-width="4"/>
  <path d="M352 1275L602 1133C540 1030 500 965 470 910C440 850 380 745 318 732C290 726 275 760 275 805C275 920 305 1070 352 1275z" stroke="#0be00f" stroke-width="4"/>
  <path d="M281 754C300 744 330 750 358 768C405 800 450 860 473 915C492 960 488 1000 468 1008C430 1022 375 985 330 935C290 890 268 840 268 795C268 775 272 760 281 754z" stroke="#00e0e8" stroke-width="4"/>
  <path d="M240 285L557 101C520 235 480 370 440 475C420 523 405 542 388 542C370 542 345 500 325 465C295 408 265 345 240 285zM240 1269L557 1086C530 1020 500 955 470 905C445 855 425 829 406 829C385 829 368 860 352 900C310 1010 275 1140 240 1269z" stroke="#ea0cea" stroke-width="4"/>
  <g stroke="#e0e1e2"><path d="M333 990v165" stroke="#b7babd" stroke-width="5"/><path d="M333 1156l114-65M333 1156l148 49M349 941h41l-42 42h42M453 1034l21 19 21-19M474 1053v24M495 1158l42 41M537 1158l-42 41M311 1156l22-12 24 12-24 11zM322 1151h22v12h-22z"/></g>
  <path d="M733 402v290" stroke="#7172e8"/><path d="M669 632l194-112" stroke="#66d76b"/><path d="M648 568l257 85" stroke="#df6d70"/>
  <path d="M724 586h19v19h-19z" fill="#212830" stroke="#f4f4f4"/>
 </svg>

 <svg class="cube" width="178" height="125" viewBox="0 0 534 375">
  <path fill-rule="evenodd" fill="#444b54" d="M60 260a204 104 0 1 0 408 0a204 104 0 1 0-408 0zM104 254a160 79 0 1 0 320 0a160 79 0 1 0-320 0z"/>
  <g font-family="Liberation Sans" font-weight="700" font-size="46" fill="#aeb1b5"><text transform="matrix(1 .3 -.7 .7 106 194)">W</text><text transform="matrix(1.300 .25 -.6 .9 118 336)">S</text><text transform="matrix(1.300 .3 -.7 .8 396 312)">E</text><path d="M368 185l16-15 6 2-20 18z"/></g>
  <path d="M155 100L252 56 372 91 281 137z" fill="#b3b5b6"/><path d="M155 100l126 37-1 149-119-48z" fill="#a1a3a4"/><path d="M281 137l91-46-4 127-88 68z" fill="#8d8f91"/>
  <path d="M155 100l126 37 91-46M281 137v149" fill="none" stroke="#62676c" stroke-width="2" stroke-dasharray="17 9"/>
  <path d="M256 132l25-9 17 8v28l-18 7-24-7z" fill="#8f9ba6" opacity=".6"/>
  <g font-family="Open Sans" font-weight="700" fill="#4b5158"><text font-size="33" transform="matrix(.78 .24 0 1.050 174 192)">FRONT</text><text font-size="33" transform="matrix(.58 -.38 0 1.150 296 219)">RIGHT</text><text font-size="27" transform="matrix(.95 .22 -.8 .6 240 96)">TOP</text></g>
 </svg>
 <button class="ucs-btn">elipse<svg width="10" height="6"><path d="M0 0h10L5 5z" fill="#b6b9c4" stroke="#c4c6cf"/></svg></button>

 <div class="navbar-v">
  <button aria-label="Close bar" class="ms-auto me-1"><svg width="10" height="12"><circle cx="5" cy="6" r="5" fill="#454a4f"/><path d="M3 4l4 4M7 4L3 8" stroke="#73777b"/></svg></button>
  <button aria-label="Steering wheel" class="mt-2"><svg width="30" height="30" fill="none" stroke="#3c4351" stroke-width="1.500"><path d="M15 1h13v14A13.500 13.500 0 1 1 15 1z"/><circle cx="15" cy="15" r="7.500"/><path d="M5 24l5-4M25 24l-5-4"/></svg></button>
  <span class="caret-s mt-2"></span><hr class="my-1">
  <button aria-label="Pan"><svg width="30" height="32" fill="none" stroke="#3c4351" stroke-width="1.500"><path d="M11 30C6 24 4 19 2 14c1-3 4-1 6 4V7c0-3 3-3 4 0l1 8V3c0-3 4-3 4 0v12l2-11c1-3 4-2 4 1l-1 12 3-6c2-2 4 0 3 2-2 8-3 13-7 17z"/></svg></button>
  <button aria-label="Zoom" class="mt-1"><svg width="30" height="32" fill="none" stroke="#3c4351" stroke-width="1.500"><path d="M2 2l17 18M19 2L2 20M2 7V2h5M14 2h5v5M2 15v5h5"/><circle cx="20" cy="20" r="6" fill="#666a6f"/><path d="M24 25l5 5" stroke-width="3"/></svg></button>
  <span class="caret-s mt-1"></span>
  <button aria-label="Orbit" class="mt-2"><svg width="30" height="28" fill="none" stroke="#3c4351" stroke-width="1.500"><path d="M12 27V6H9l6-5 6 5h-3v21zM10 10c-12 3-11 10 2 11M19 10c12 3 12 9 0 11"/><path d="M6 20l6-4v8z" fill="#3c4351"/></svg></button>
  <span class="caret-s mt-2"></span><hr class="my-1">
  <button aria-label="Show motion"><svg width="30" height="30" fill="none" stroke="#3c4351" stroke-width="1.500"><path d="M1 1h8v8H1zM11 1h8v8h-8zM21 1h8v8h-8zM1 12h20v17H1z"/><path d="M7 15l9 5-9 5z" fill="#3c4351"/></svg></button>
  <svg class="ms-auto me-1 mt-auto mb-1" width="10" height="10"><circle cx="5" cy="5" r="4.500" fill="none" stroke="#3c4351"/><path d="M2 4h6M3 6h4" stroke="#3c4351"/></svg>
 </div>

 <div class="cmd">
  <div class="hist d-flex flex-column align-items-start">
   <div class="dim">Current layer:  "JANELAS"</div>
   <div>Enter an option [?/Make/Set/New/Rename/ON/OFF/Color/Ltype/LWeight/TRansparency/MATerial/Plot/Freeze/Thaw/LOck/<br>Unlock/stAte/Description/rEconcile/Xref]:</div>
   <div class="lit">Command: *Cancel*</div>
  </div>
  <div class="d-flex">
   <div class="cmd-left d-flex align-items-center">
    <svg width="8" height="24"><path d="M2 0v24M6 0v24" stroke="#bbbdbf" stroke-width="2" stroke-dasharray="2 2"/></svg>
    <button aria-label="Close command line"><svg width="12" height="14"><path d="M1 1l10 12M11 1L1 13" stroke="#bbbdbf" stroke-width="2.200"/></svg></button>
    <button aria-label="Customize command line" class="ms-1"><svg width="20" height="22"><path d="M2 20l10-11" stroke="#bbbdbf" stroke-width="4"/><path d="M19 4l-4 3-3-1V3l3-3c-5 0-7 4-5 8 3 4 9 2 9-4z" fill="#bbbdbf"/></svg></button>
   </div>
   <div class="cmd-box d-flex align-items-center">
    <svg width="20" height="18"><path d="M.500.500h19v16H.500z" fill="#b0b2b4" stroke="#595b5e"/><path d="M0 0h20v4H0z" fill="#4c4e51"/><path d="M2 7l4 3-4 3M7 13h4" fill="none" stroke="#555"/></svg>
    <span class="caret-l ms-1"></span>
    <input type="text" placeholder="Type a command" aria-label="Type a command">
    <svg width="10" height="6"><path d="M0 6l5-6 5 6z" fill="#4c4e51"/></svg>
   </div>
  </div>
 </div>
</section>
<div class="rule"></div>

<footer class="status d-flex flex-shrink-0 justify-content-between">
 <nav class="layouts d-flex align-items-center">
  <a href="#" class="slant d-flex align-items-center">Model</a>
  <a href="#">a3rd</a><span class="slash"></span><a href="#">a4rd</a><span class="slash"></span>
  <button aria-label="New layout"><svg width="16" height="16"><path d="M8 0v16M0 8h16" stroke="#e4e5e6" stroke-width="2.500"/></svg></button><span class="slash"></span>
 </nav>
 <div class="groups-row d-flex">
  <div class="sgrp px-1"><button>MODEL</button></div>
  <div class="sgrp"><button class="w29" aria-label="Grid"><svg width="20" height="20"><path d="M0 4.500h20M0 10h20M0 15.500h20M4.500 0v20M10 0v20M15.500 0v20" stroke="#d9dadb" stroke-width="1.200"/></svg></button><button class="w32" aria-label="Snap"><svg width="16" height="16" fill="#d9dadb"><path d="M0 1h3v3H0zM6 1h3v3H6zM12 1h3v3h-3zM0 7h3v3H0zM6 7h3v3H6zM12 7h3v3h-3zM0 13h3v3H0zM6 13h3v3H6zM12 13h3v3h-3z"/></svg></button><span class="caret-l"></span></div>
  <div class="sgrp"><button class="w32" aria-label="Ortho"><svg width="20" height="20"><path d="M1 0v19.500h19" fill="none" stroke="#d9dadb"/><path d="M1 14h6v5" fill="none" stroke="#9a9ea6"/></svg></button><button class="on" aria-label="Polar"><svg width="20" height="20" fill="none"><circle cx="8" cy="11" r="7.500" stroke="#e8eef5" stroke-width="1.500"/><path d="M8 11L17 2M8 11h12" stroke="#fff" stroke-width="1.200"/></svg></button><span class="caret-l"></span><button class="w32" aria-label="Isodraft"><svg width="16" height="20"><path d="M0 2l15 15" stroke="#b3585c"/><path d="M8 0v20" stroke="#4fc267" stroke-width="1.200"/><circle cx="8" cy="10" r="2" fill="#3b4453" stroke="#eee"/></svg></button><span class="caret-l"></span><button class="w32" aria-label="Object track"><svg width="20" height="20"><path d="M2 16L16 1" stroke="#aaa"/><path d="M0 17h20" stroke="#8c9098" stroke-width="2"/><circle cx="8" cy="9" r="2.500" fill="#eee"/></svg></button><button class="on" aria-label="Object snap"><svg width="20" height="20" fill="none" stroke="#fff"><path d="M3.500 3.500h16v16h-16z" stroke="#dce7f2"/><path d="M1 1h5v5H1z" fill="#6090c3"/></svg></button><span class="caret-l"></span></div>
  <div class="sgrp"><button class="on text-white" aria-label="Annotation visibility"><svg width="20" height="20"><use href="#annoman" x="-2" width="20" height="20"/><circle cx="16" cy="4" r="3.500" fill="none" stroke="#eee"/></svg></button><button class="w32" aria-label="Auto scale"><svg width="20" height="20" color="#d9dadb"><use href="#annoman" x="-2" width="20" height="20"/><path d="M16 0l-3 5h3l-1 4 5-6h-3z" fill="#eee"/></svg></button><button class="w29" aria-label="Annotation scale"><svg width="20" height="20" color="#d9dadb"><use href="#annoman" width="20" height="20"/></svg></button><button class="ps-1">1:1<span class="caret-l"></span></button></div>
  <div class="sgrp"><button class="w29" aria-label="Workspace"><svg width="20" height="20"><circle cx="10" cy="10" r="6" fill="none" stroke="#d9dadb" stroke-width="5"/><circle cx="10" cy="10" r="9" fill="none" stroke="#d9dadb" stroke-width="2.500" stroke-dasharray="3.530 3.530"/></svg></button><span class="caret-l"></span></div>
  <div class="sgrp"><button class="w29" aria-label="Annotation monitor"><svg width="20" height="20"><path d="M10 0v20M0 10h20" stroke="#e4e5e6" stroke-width="2"/></svg></button></div>
  <div class="sgrp"><button class="w32" aria-label="Isolate objects"><svg width="20" height="20" fill="none" stroke="#c9cbce"><path d="M.500.500h8v7h-8zM8 12l4 7.500H3z"/><circle cx="15" cy="9" r="4.500"/></svg></button></div>
  <div class="sgrp"><button class="w34" aria-label="Hardware acceleration"><svg width="26" height="26"><circle cx="12" cy="11" r="10" fill="#2b66ab"/><path d="M6 2v12M0 7h12" stroke="#d9ecff" stroke-width="1.500"/><path d="M0 15h11v7H0z" fill="#ffc02e"/><path d="M9 18l6 6 9-10" fill="none" stroke="#53b95a" stroke-width="4"/></svg></button></div>
  <div class="sgrp"><button class="w32" aria-label="Clean screen"><svg width="20" height="16"><path d="M.500.500h19v14H.500z" fill="none" stroke="#c9cbce"/><path d="M3 8v5h5zM17 7V2h-5z" fill="#e4e5e6"/></svg></button><button class="w29" aria-label="Customization"><svg width="20" height="18"><path d="M0 1h20M0 9h20M0 17h20" stroke="#e4e5e6" stroke-width="2"/></svg></button></div>
 </div>
</footer>
</body>
</html>
